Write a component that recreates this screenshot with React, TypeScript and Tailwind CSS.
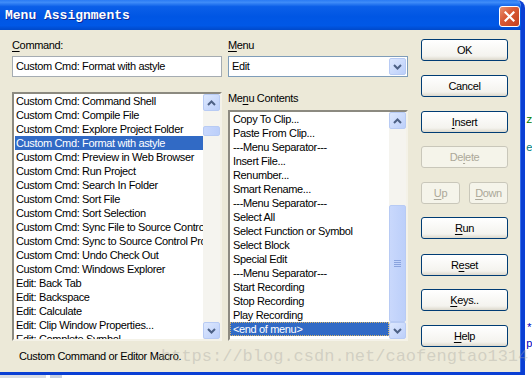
import React from "react";

const leftItems = [
  "Custom Cmd: Command Shell",
  "Custom Cmd: Compile File",
  "Custom Cmd: Explore Project Folder",
  "Custom Cmd: Format with astyle",
  "Custom Cmd: Preview in Web Browser",
  "Custom Cmd: Run Project",
  "Custom Cmd: Search In Folder",
  "Custom Cmd: Sort File",
  "Custom Cmd: Sort Selection",
  "Custom Cmd: Sync File to Source Control",
  "Custom Cmd: Sync to Source Control Project",
  "Custom Cmd: Undo Check Out",
  "Custom Cmd: Windows Explorer",
  "Edit: Back Tab",
  "Edit: Backspace",
  "Edit: Calculate",
  "Edit: Clip Window Properties...",
  "Edit: Complete Symbol",
];

const rightItems = [
  "Copy To Clip...",
  "Paste From Clip...",
  "---Menu Separator---",
  "Insert File...",
  "Renumber...",
  "Smart Rename...",
  "---Menu Separator---",
  "Select All",
  "Select Function or Symbol",
  "Select Block",
  "Special Edit",
  "---Menu Separator---",
  "Start Recording",
  "Stop Recording",
  "Play Recording",
  "<end of menu>",
];

function U({ children }: { children: React.ReactNode }) {
  return <span className="underline decoration-1 underline-offset-[2px]">{children}</span>;
}

function Chevron({ dir }: { dir: "up" | "down" }) {
  return (
    <svg width="9" height="6" viewBox="0 0 9 6">
      {dir === "up" ? (
        <path d="M1 5 L4.5 1.5 L8 5" fill="none" stroke="#4d6185" strokeWidth="2" />
      ) : (
        <path d="M1 1 L4.5 4.5 L8 1" fill="none" stroke="#4d6185" strokeWidth="2" />
      )}
    </svg>
  );
}

function ArrowBtn({ dir }: { dir: "up" | "down" }) {
  return (
    <div className="w-[17px] h-[17px] shrink-0 rounded-[2px] border border-[#b8cbf4] bg-[linear-gradient(to_bottom_right,#dde8fe,#bccffa)] flex items-center justify-center">
      <Chevron dir={dir} />
    </div>
  );
}

function Thumb({ h, grip }: { h: number; grip?: boolean }) {
  return (
    <div
      className="w-[17px] shrink-0 rounded-[2px] border border-[#b8cbf4] bg-[linear-gradient(to_right,#c9d8fc,#bccffa)] flex flex-col items-center justify-center gap-[1px]"
      style={{ height: h }}
    >
      {grip && (
        <>
          <div className="w-[7px] h-[1px] bg-[#8aa3de]" />
          <div className="w-[7px] h-[1px] bg-[#8aa3de]" />
          <div className="w-[7px] h-[1px] bg-[#8aa3de]" />
          <div className="w-[7px] h-[1px] bg-[#8aa3de]" />
        </>
      )}
    </div>
  );
}

function Btn({
  children,
  disabled,
  className = "",
}: {
  children: React.ReactNode;
  disabled?: boolean;
  className?: string;
}) {
  return (
    <div
      className={`h-[22px] flex items-center justify-center rounded-[3px] border ${
        disabled
          ? "border-[#c9c7ba] text-[#aca899] bg-[#f5f4ea]"
          : "border-[#003c74] text-black bg-[linear-gradient(to_bottom,#ffffff,#f4f3ee_80%,#dcd8cc)]"
      } ${className}`}
    >
      {children}
    </div>
  );
}

export default function App() {
  const ui = "font-['Liberation_Sans',Arial,sans-serif] text-[11px] tracking-[-0.35px]";
  return (
    <div className={`relative w-[532px] h-[378px] overflow-hidden bg-white ${ui}`}>
      <div className="flex flex-col h-full">
        <div className="flex flex-1 min-h-0">
          {/* Dialog */}
          <div className="w-[525px] flex flex-col border-r-[4px] border-b-[3px] border-[#0a3fd4] rounded-tr-[8px] overflow-hidden">
            {/* Title bar */}
            <div className="h-[30px] shrink-0 flex items-center justify-between pl-[5px] pr-[1px] bg-[linear-gradient(to_bottom,#2a7bf4_0%,#3f8cf8_8%,#0b5fe8_22%,#0056e4_55%,#0058e7_85%,#0049ca_100%)]">
              <span className="font-['Liberation_Mono',monospace] font-bold text-[13px] tracking-[0px] text-white [text-shadow:1px_1px_0_#0a2a9a] mt-[1px]">
                Menu Assignments
              </span>
              <div className="w-[21px] h-[21px] mt-[3px] rounded-[3px] border border-white bg-[linear-gradient(to_bottom_right,#e9906f,#d95b37_40%,#c3401d)] flex items-center justify-center">
                <svg width="11" height="11" viewBox="0 0 11 11">
                  <path d="M1.5 1.5 L9.5 9.5 M9.5 1.5 L1.5 9.5" stroke="white" strokeWidth="2.2" strokeLinecap="square" />
                </svg>
              </div>
            </div>
            {/* Client */}
            <div className="flex-1 bg-[#ece9d8] flex pl-[12px] pt-[9px] border-r border-[#3a6fe8]">
              {/* Column 1 */}
              <div className="w-[210px] flex flex-col">
                <div className="h-[13px] leading-[13px]">
                  <U>C</U>ommand:
                </div>
                <div className="mt-[4px] h-[21px] bg-white border border-[#a5acb2] flex items-center pl-[3px]">
                  Custom Cmd: Format with astyle
                </div>
                <div className="mt-[15px] h-[249px] bg-white border-2 border-t-[#8c8a80] border-l-[#8c8a80] border-r-[#f4f2e8] border-b-[#f4f2e8] flex overflow-hidden">
                  <div className="flex-1 min-w-0 pl-[1px] overflow-hidden">
                    {leftItems.map((t, i) => (
                      <div
                        key={i}
                        className={`h-[14px] leading-[14px] pl-[1px] whitespace-nowrap overflow-hidden ${
                          i === 3 ? "bg-[#316ac5] text-white" : "text-black"
                        }`}
                      >
                        {t}
                      </div>
                    ))}
                  </div>
                  <div className="w-[17px] shrink-0 bg-[#f5f4ef] flex flex-col">
                    <ArrowBtn dir="up" />
                    <div className="h-[15px]" />
                    <Thumb h={10} />
                    <div className="flex-1" />
                    <ArrowBtn dir="down" />
                  </div>
                </div>
                <div className="mt-[9px] pl-[7px] h-[13px] leading-[13px]">Custom Command or Editor Macro.</div>
              </div>
              {/* Column 2 */}
              <div className="w-[180px] ml-[6px] flex flex-col">
                <div className="h-[13px] leading-[13px]">
                  <U>M</U>enu
                </div>
                <div className="mt-[4px] h-[21px] bg-white border border-[#7f9db9] flex items-center justify-between pl-[3px] pr-[1px]">
                  <span>Edit</span>
                  <div className="w-[17px] h-[17px] rounded-[2px] border border-[#b8cbf4] bg-[linear-gradient(to_bottom_right,#dde8fe,#bccffa)] flex items-center justify-center">
                    <Chevron dir="down" />
                  </div>
                </div>
                <div className="mt-[15px] h-[13px] leading-[13px]">
                  Me<U>n</U>u Contents
                </div>
                <div className="mt-[5px] h-[231px] bg-white border-2 border-t-[#8c8a80] border-l-[#8c8a80] border-r-[#f4f2e8] border-b-[#f4f2e8] flex overflow-hidden">
                  <div className="flex-1 min-w-0 overflow-hidden">
                    {rightItems.map((t, i) => (
                      <div
                        key={i}
                        className={`h-[14px] leading-[12px] pl-[2px] whitespace-nowrap overflow-hidden border ${
                          i === 15
                            ? "bg-[#316ac5] text-white border-dotted border-[#d7b56a]"
                            : "text-black border-transparent"
                        }`}
                      >
                        {t}
                      </div>
                    ))}
                  </div>
                  <div className="w-[17px] shrink-0 bg-[#f5f4ef] flex flex-col">
                    <ArrowBtn dir="up" />
                    <div className="flex-1" />
                    <Thumb h={117} grip />
                    <ArrowBtn dir="down" />
                  </div>
                </div>
              </div>
              {/* Column 3 */}
              <div className="w-[87px] ml-[13px] flex flex-col">
                <Btn className="mt-[0px]">OK</Btn>
                <Btn className="mt-[14px]">Cancel</Btn>
                <Btn className="mt-[14px]">
                  <U>I</U>nsert
                </Btn>
                <Btn className="mt-[13px]" disabled>
                  De<U>l</U>ete
                </Btn>
                <div className="mt-[14px] flex justify-between">
                  <Btn className="w-[39px]" disabled>
                    <U>U</U>p
                  </Btn>
                  <Btn className="w-[39px]" disabled>
                    <U>D</U>own
                  </Btn>
                </div>
                <Btn className="mt-[13px]">
                  <U>R</U>un
                </Btn>
                <Btn className="mt-[15px]">
                  R<U>e</U>set
                </Btn>
                <Btn className="mt-[13px]">
                  <U>K</U>eys..
                </Btn>
                <Btn className="mt-[14px]">
                  <U>H</U>elp
                </Btn>
              </div>
            </div>
          </div>
          {/* Right background strip */}
          <div className="flex-1 bg-white relative font-['Liberation_Mono',monospace] text-[11px] tracking-[0px]">
            <div className="absolute left-[1px] top-[112px] text-[#008000]">ze</div>
            <div className="absolute left-[1px] top-[140px] text-[#008080]">e</div>
            <div className="absolute left-[1px] top-[320px] text-[#0000c0]">**</div>
            <div className="absolute left-[1px] top-[336px] text-[#0000c0]">pi</div>
          </div>
        </div>
        {/* Bottom background strip */}
        <div className="h-[3px] flex bg-white">
          <div className="w-[46px] bg-[#d8dce4]" />
          <div className="w-[4px] bg-white" />
          <div className="w-[12px] bg-[#c8d0e0]" />
        </div>
      </div>
      {/* Watermark */}
      <div className="absolute left-[161px] top-[344px] font-['Liberation_Mono',monospace] text-[17px] tracking-[0px] text-[#a8a8a0]/40 whitespace-nowrap pointer-events-none">
        https://blog.csdn.net/caofengtao1314
      </div>
    </div>
  );
}
